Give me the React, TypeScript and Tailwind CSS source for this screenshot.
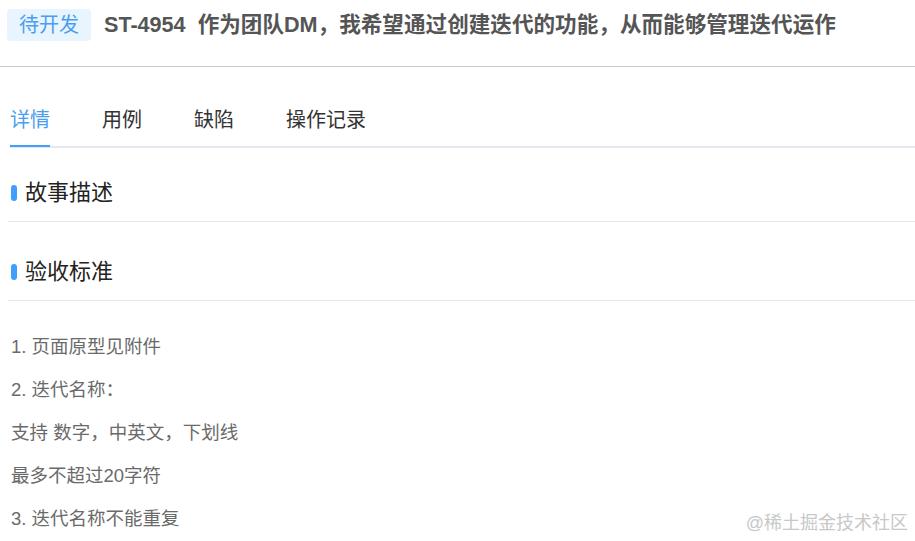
const tabs = ['详情', '用例', '缺陷', '操作记录'];

const criteria = [
  '1. 页面原型见附件',
  '2. 迭代名称：',
  '支持 数字，中英文，下划线',
  '最多不超过20字符',
  '3. 迭代名称不能重复',
];

function SectionTitle({ title }: { title: string }) {
  return (
    <div className="ml-[8px] flex items-center pl-[3px] pb-[13px] border-b border-[#e8e8e8]">
      <span className="w-[6px] h-[16px] rounded-[3px] bg-[#409eff]" />
      <span className="ml-[8px] text-[22px] leading-[30px] text-[#222]">{title}</span>
    </div>
  );
}

export default function App() {
  return (
    <div className="relative w-[915px] h-[541px] overflow-hidden bg-white font-['Liberation_Sans','Noto_Sans_CJK_SC',sans-serif]">
      {/* header */}
      <div className="h-[67px] flex items-start pt-[9px] pl-[7px] border-b border-[#cccccc]">
        <span className="h-[32px] px-[12px] rounded-[4px] bg-[#e8f4fe] text-[20px] leading-[32px] text-[#4a9ef0]">
          待开发
        </span>
        <h1 className="ml-[13px] text-[21.6px] leading-[32px] font-bold text-[#555555] whitespace-nowrap">
          ST-4954&nbsp;&nbsp;作为团队DM，我希望通过创建迭代的功能，从而能够管理迭代运作
        </h1>
      </div>

      {/* tabs */}
      <div className="mt-[33px] ml-[10px] flex gap-[52px] border-b-2 border-[#e4e7ed]">
        {tabs.map((t, i) => (
          <div
            key={t}
            className={
              'relative h-[46px] text-[20px] leading-[40px] ' +
              (i === 0 ? 'text-[#4a9ef0]' : 'text-[#333333]')
            }
          >
            {t}
            {i === 0 && <span className="absolute left-0 right-0 -bottom-[1px] h-[2px] bg-[#409eff]" />}
          </div>
        ))}
      </div>

      <div className="mt-[30px]">
        <SectionTitle title="故事描述" />
      </div>
      <div className="mt-[35px]">
        <SectionTitle title="验收标准" />
      </div>

      <div className="mt-[24px] pl-[11px] text-[18.5px] leading-[43px] text-[#6a6a6a]">
        {criteria.map((c) => (
          <p key={c}>{c}</p>
        ))}
      </div>

      <div className="absolute right-[7px] bottom-[7px] text-[18px] leading-[22px] text-[#c8c8c8]">
        @稀土掘金技术社区
      </div>
    </div>
  );
}
